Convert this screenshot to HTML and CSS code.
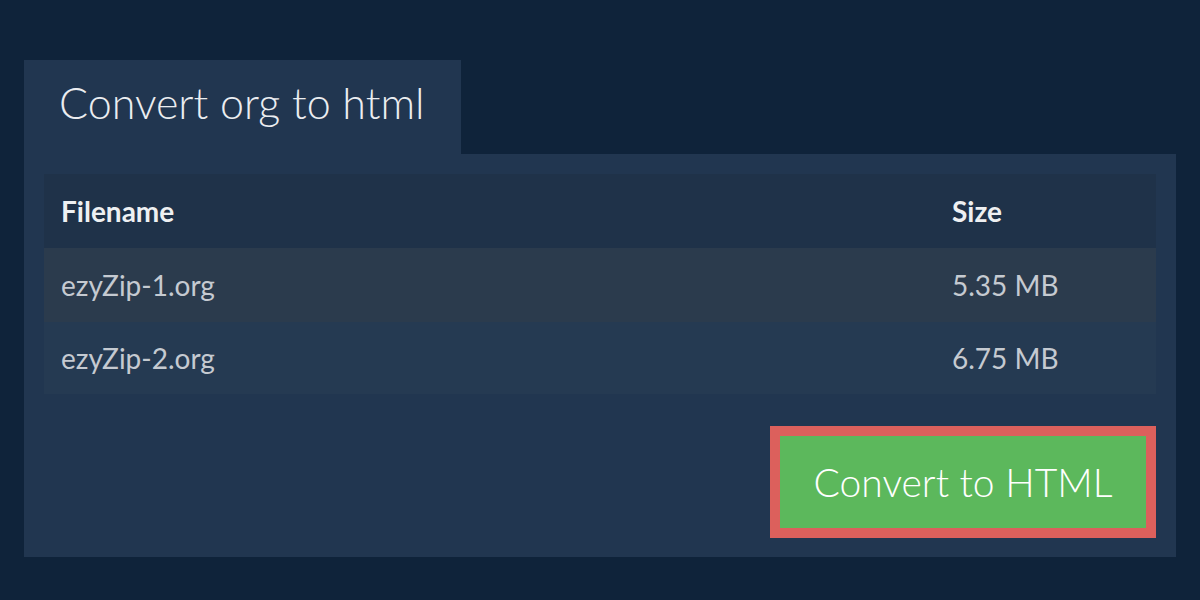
FILE: index.html
```html
<!DOCTYPE html>
<html>
<head>
<meta charset="utf-8">
<link rel="stylesheet" href="styles.css">
</head>
<body>
<div class="page">
  <div class="tab"><h1 class="title">Convert org to html</h1></div>
  <div class="panel">
    <table class="files">
      <thead>
        <tr><th class="col-name">Filename</th><th class="col-size">Size</th></tr>
      </thead>
      <tbody>
        <tr class="row-odd"><td>ezyZip-1.org</td><td>5.35 MB</td></tr>
        <tr class="row-even"><td>ezyZip-2.org</td><td>6.75 MB</td></tr>
      </tbody>
    </table>
    <div class="actions">
      <button class="convert">Convert to HTML</button>
    </div>
  </div>
</div>
</body>
</html>
```

FILE: styles.css
```css
html, body {
  margin: 0;
  padding: 0;
  background: #0f233a;
  font-family: Lato, "Open Sans", sans-serif;
}
.page {
  padding: 60px 24px 0 24px;
}
.tab {
  display: inline-block;
  background: #213650;
  padding: 0 36px 0 35px;
  height: 94px;
  box-sizing: border-box;
}
.title {
  margin: 0;
  font-size: 43px;
  font-weight: 300;
  color: #ebedf0;
  line-height: 86px;
}
.panel {
  background: #213650;
  padding: 20px 20px 19px 20px;
}
.files {
  width: 100%;
  border-collapse: collapse;
  font-size: 28px;
}
.files th {
  text-align: left;
  font-weight: 700;
  color: #eef0f2;
  height: 74px;
  padding: 0 17px;
  background: #1f3249;
}
.files td {
  padding: 0 17px;
  color: #c5cad1;
  height: 74px;
}
.col-size {
  width: 187px;
}
.row-odd {
  background: #2b3b4d;
}
.row-even td {
  height: 72px;
}
.row-even {
  background: #253a52;
}
.actions {
  display: flex;
  justify-content: flex-end;
  margin-top: 32px;
}
.convert {
  width: 386px;
  height: 112px;
  box-sizing: border-box;
  border: 10px solid #dc605c;
  background: #5cb85c;
  color: #ffffff;
  font-family: Lato, "Open Sans", sans-serif;
  font-size: 39px;
  font-weight: 300;
  padding: 0;
  margin: 0;
}
```
